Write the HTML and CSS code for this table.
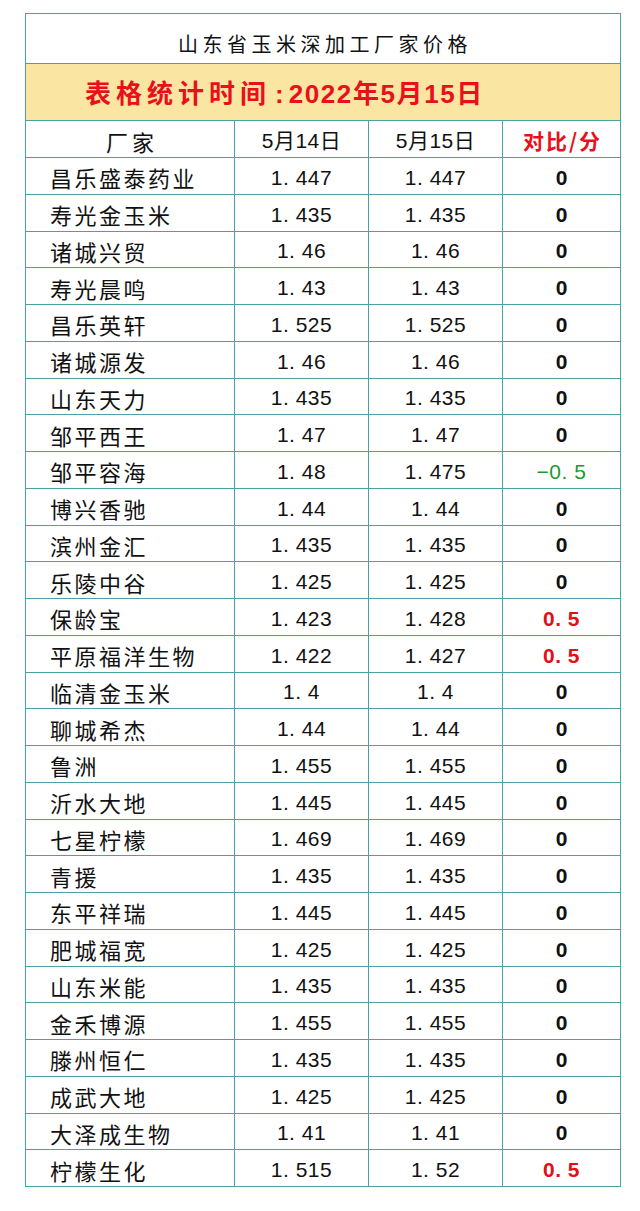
FILE: index.html
```html
<!DOCTYPE html>
<html lang="zh-CN">
<head>
<meta charset="utf-8">
<title>山东省玉米深加工厂家价格</title>
<link rel="stylesheet" href="styles.css">
</head>
<body>
<table class="price-table">
  <colgroup>
    <col class="c-name"><col class="c-d1"><col class="c-d2"><col class="c-diff">
  </colgroup>
  <thead>
    <tr class="title-row"><th colspan="4">山东省玉米深加工厂家价格</th></tr>
    <tr class="date-row"><th colspan="4"><span class="date-lead">表格统计时间</span><span class="colon">:</span><span class="date-rest">2022年5月15日</span></th></tr>
    <tr class="head-row">
      <th class="h-name">厂家</th>
      <th class="h-date">5月14日</th>
      <th class="h-date">5月15日</th>
      <th class="h-diff">对比/分</th>
    </tr>
  </thead>
  <tbody>
    <tr><td class="name">昌乐盛泰药业</td><td class="num">1. 447</td><td class="num">1. 447</td><td class="diff">0</td></tr>
    <tr><td class="name">寿光金玉米</td><td class="num">1. 435</td><td class="num">1. 435</td><td class="diff">0</td></tr>
    <tr><td class="name">诸城兴贸</td><td class="num">1. 46</td><td class="num">1. 46</td><td class="diff">0</td></tr>
    <tr><td class="name">寿光晨鸣</td><td class="num">1. 43</td><td class="num">1. 43</td><td class="diff">0</td></tr>
    <tr><td class="name">昌乐英轩</td><td class="num">1. 525</td><td class="num">1. 525</td><td class="diff">0</td></tr>
    <tr><td class="name">诸城源发</td><td class="num">1. 46</td><td class="num">1. 46</td><td class="diff">0</td></tr>
    <tr><td class="name">山东天力</td><td class="num">1. 435</td><td class="num">1. 435</td><td class="diff">0</td></tr>
    <tr><td class="name">邹平西王</td><td class="num">1. 47</td><td class="num">1. 47</td><td class="diff">0</td></tr>
    <tr><td class="name">邹平容海</td><td class="num">1. 48</td><td class="num">1. 475</td><td class="diff down">−0. 5</td></tr>
    <tr><td class="name">博兴香驰</td><td class="num">1. 44</td><td class="num">1. 44</td><td class="diff">0</td></tr>
    <tr><td class="name">滨州金汇</td><td class="num">1. 435</td><td class="num">1. 435</td><td class="diff">0</td></tr>
    <tr><td class="name">乐陵中谷</td><td class="num">1. 425</td><td class="num">1. 425</td><td class="diff">0</td></tr>
    <tr><td class="name">保龄宝</td><td class="num">1. 423</td><td class="num">1. 428</td><td class="diff up">0. 5</td></tr>
    <tr><td class="name">平原福洋生物</td><td class="num">1. 422</td><td class="num">1. 427</td><td class="diff up">0. 5</td></tr>
    <tr><td class="name">临清金玉米</td><td class="num">1. 4</td><td class="num">1. 4</td><td class="diff">0</td></tr>
    <tr><td class="name">聊城希杰</td><td class="num">1. 44</td><td class="num">1. 44</td><td class="diff">0</td></tr>
    <tr><td class="name">鲁洲</td><td class="num">1. 455</td><td class="num">1. 455</td><td class="diff">0</td></tr>
    <tr><td class="name">沂水大地</td><td class="num">1. 445</td><td class="num">1. 445</td><td class="diff">0</td></tr>
    <tr><td class="name">七星柠檬</td><td class="num">1. 469</td><td class="num">1. 469</td><td class="diff">0</td></tr>
    <tr><td class="name">青援</td><td class="num">1. 435</td><td class="num">1. 435</td><td class="diff">0</td></tr>
    <tr><td class="name">东平祥瑞</td><td class="num">1. 445</td><td class="num">1. 445</td><td class="diff">0</td></tr>
    <tr><td class="name">肥城福宽</td><td class="num">1. 425</td><td class="num">1. 425</td><td class="diff">0</td></tr>
    <tr><td class="name">山东米能</td><td class="num">1. 435</td><td class="num">1. 435</td><td class="diff">0</td></tr>
    <tr><td class="name">金禾博源</td><td class="num">1. 455</td><td class="num">1. 455</td><td class="diff">0</td></tr>
    <tr><td class="name">滕州恒仁</td><td class="num">1. 435</td><td class="num">1. 435</td><td class="diff">0</td></tr>
    <tr><td class="name">成武大地</td><td class="num">1. 425</td><td class="num">1. 425</td><td class="diff">0</td></tr>
    <tr><td class="name">大泽成生物</td><td class="num">1. 41</td><td class="num">1. 41</td><td class="diff">0</td></tr>
    <tr><td class="name">柠檬生化</td><td class="num">1. 515</td><td class="num">1. 52</td><td class="diff up">0. 5</td></tr>
  </tbody>
</table>
</body>
</html>
```

FILE: styles.css
```css
html, body {
  margin: 0;
  padding: 0;
  background: #ffffff;
}

body {
  padding: 13px 0 0 25px;
  font-family: "Liberation Sans", "Noto Sans CJK SC", sans-serif;
  color: #111111;
}

.price-table {
  border-collapse: collapse;
  table-layout: fixed;
  width: 595px;
}

.c-name { width: 209px; }
.c-d1 { width: 134px; }
.c-d2 { width: 134px; }
.c-diff { width: 118px; }

.price-table th,
.price-table td {
  border: 1px solid #4aa2a6;
  padding: 0;
  white-space: nowrap;
  overflow: hidden;
  line-height: 1;
}

.price-table .title-row th {
  height: 50px;
  box-sizing: border-box;
  padding-top: 10px;
  font-family: "Noto Sans CJK SC", sans-serif;
  font-weight: 400;
  font-size: 20px;
  letter-spacing: 4.5px;
  text-indent: 4px;
  color: #111111;
  text-align: center;
}

.price-table .date-row th {
  height: 57px;
  box-sizing: border-box;
  background: #fbe5a2;
  text-align: left;
  padding-left: 59px;
  padding-top: 2px;
  color: #e8101a;
  font-weight: 700;
  font-size: 26px;
}

.date-lead {
  font-family: "Noto Sans CJK SC", sans-serif;
  letter-spacing: 5px;
}

.colon {
  font-family: "Liberation Sans", sans-serif;
  margin: 0 5px 0 4px;
}

.date-rest {
  font-family: "Liberation Sans", "Noto Sans CJK SC", sans-serif;
  letter-spacing: 1.6px;
}

.price-table .head-row th {
  height: 37px;
  box-sizing: border-box;
  padding-top: 3px;
  font-size: 21px;
  font-weight: 400;
  text-align: center;
  color: #111111;
}

.price-table .head-row .h-name {
  font-family: "Noto Sans CJK SC", sans-serif;
  letter-spacing: 4px;
  text-indent: 4px;
  font-size: 22px;
}

.price-table .head-row .h-date {
  letter-spacing: 0.5px;
}

.price-table .head-row .h-diff {
  font-family: "Noto Sans CJK SC", sans-serif;
  font-weight: 700;
  color: #e8101a;
  letter-spacing: 2px;
  text-indent: 2px;
  font-size: 21px;
}

tbody tr {
  height: 36.75px;
}

.price-table tbody td {
  padding-top: 3px;
  box-sizing: border-box;
}

.price-table .name {
  font-family: "Noto Sans CJK SC", sans-serif;
  font-size: 22px;
  letter-spacing: 2.5px;
  padding-left: 24px;
  text-align: left;
  color: #111111;
}

.num {
  font-size: 21px;
  text-align: center;
  letter-spacing: 0.5px;
  color: #111111;
}

.diff {
  font-size: 21px;
  font-weight: 700;
  text-align: center;
  color: #111111;
}

.diff.up {
  color: #e30f16;
  letter-spacing: 0.5px;
}

.diff.down {
  color: #1b9a2c;
  font-weight: 400;
  letter-spacing: 0.5px;
}
```
